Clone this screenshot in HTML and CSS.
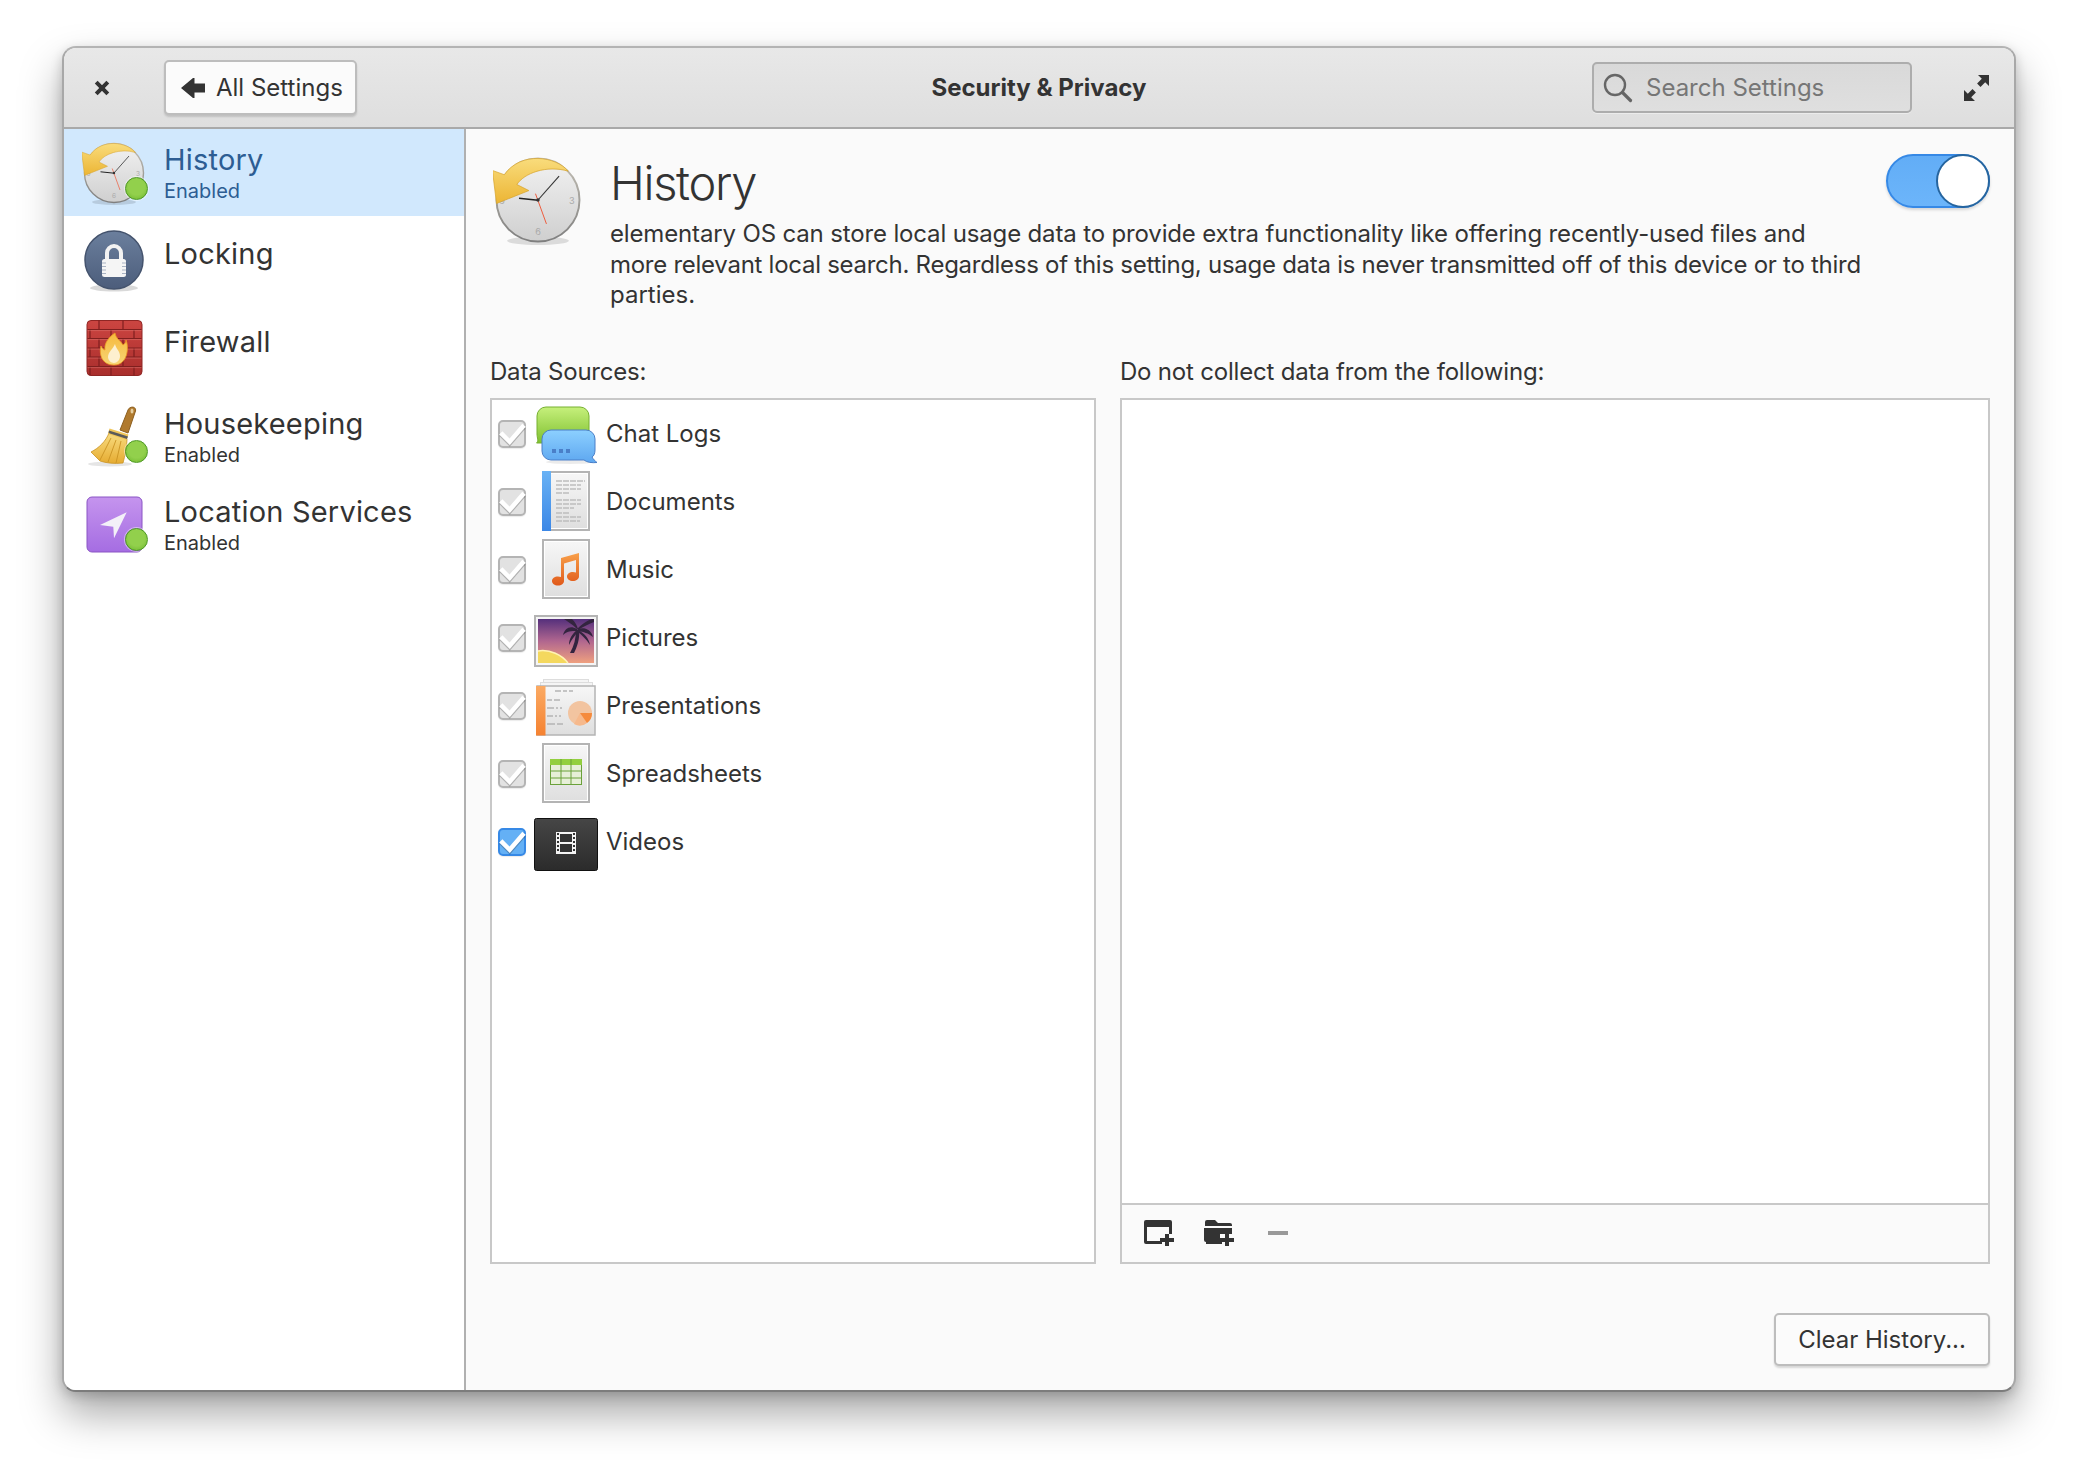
FILE: index.html
```html
<!DOCTYPE html>
<html lang="en">
<head>
<meta charset="utf-8">
<title>Security &amp; Privacy</title>
<link rel="stylesheet" href="styles.css">
</head>
<body>
<svg class="defs" width="0" height="0" aria-hidden="true">
  <defs>
    <linearGradient id="gFace" x1="0" y1="0" x2="0" y2="1"><stop offset="0" stop-color="#f2f2f2"/><stop offset="1" stop-color="#cfcfcf"/></linearGradient>
    <linearGradient id="gRing" x1="0" y1="0" x2="0" y2="1"><stop offset="0" stop-color="#c4c0b6"/><stop offset="1" stop-color="#7f7f7f"/></linearGradient>
    <linearGradient id="gArrow" x1="0" y1="0" x2="0" y2="1"><stop offset="0" stop-color="#f9dc7c"/><stop offset="1" stop-color="#ecb534"/></linearGradient>
    <linearGradient id="gLock" x1="0" y1="0" x2="0" y2="1"><stop offset="0" stop-color="#6b7f9d"/><stop offset="1" stop-color="#4c5d7b"/></linearGradient>
    <linearGradient id="gBrick" x1="0" y1="0" x2="0" y2="1"><stop offset="0" stop-color="#cc4541"/><stop offset="1" stop-color="#a92e2c"/></linearGradient>
    <linearGradient id="gFlame" x1="0" y1="0" x2="0" y2="1"><stop offset="0" stop-color="#f6b93c"/><stop offset="1" stop-color="#f7d575"/></linearGradient>
    <linearGradient id="gBristle" x1="0" y1="0" x2="0" y2="1"><stop offset="0" stop-color="#f8dc80"/><stop offset="1" stop-color="#e6ac32"/></linearGradient>
    <linearGradient id="gLoc" x1="0" y1="0" x2="0" y2="1"><stop offset="0" stop-color="#c594ee"/><stop offset="1" stop-color="#a56de2"/></linearGradient>
    <linearGradient id="gGreenB" x1="0" y1="0" x2="0" y2="1"><stop offset="0" stop-color="#c6f07c"/><stop offset="1" stop-color="#7fc02f"/></linearGradient>
    <linearGradient id="gBlueB" x1="0" y1="0" x2="0" y2="1"><stop offset="0" stop-color="#8cd0ff"/><stop offset="1" stop-color="#5ea7f0"/></linearGradient>
    <linearGradient id="gPaper" x1="0" y1="0" x2="0" y2="1"><stop offset="0" stop-color="#f7f7f7"/><stop offset="1" stop-color="#dedede"/></linearGradient>
    <linearGradient id="gStrip" x1="0" y1="0" x2="0" y2="1"><stop offset="0" stop-color="#69b2f5"/><stop offset="1" stop-color="#3b87e6"/></linearGradient>
    <linearGradient id="gNote" x1="0" y1="0" x2="0" y2="1"><stop offset="0" stop-color="#f8a04a"/><stop offset="1" stop-color="#e0591a"/></linearGradient>
    <linearGradient id="gSky" x1="0" y1="0" x2="0" y2="1"><stop offset="0" stop-color="#55307c"/><stop offset=".5" stop-color="#b0668f"/><stop offset="1" stop-color="#efa07f"/></linearGradient>
    <linearGradient id="gOrange" x1="0" y1="0" x2="0" y2="1"><stop offset="0" stop-color="#fbaa63"/><stop offset="1" stop-color="#f58231"/></linearGradient>
    <linearGradient id="gVideo" x1="0" y1="0" x2="0" y2="1"><stop offset="0" stop-color="#464646"/><stop offset="1" stop-color="#2b2b2b"/></linearGradient>
    <symbol id="clock" viewBox="0 0 64 64">
      <ellipse cx="32" cy="61" rx="22" ry="3" fill="#000" opacity=".12"/>
      <circle cx="32" cy="32" r="29.5" fill="url(#gFace)" stroke="url(#gRing)" stroke-width="1.4"/>
      <g font-family="Inter, sans-serif" font-size="6.5" fill="#aaa" text-anchor="middle">
        <text x="32" y="10">12</text><text x="56" y="34.500">3</text><text x="32" y="57">6</text><text x="6.500" y="34.500">9</text>
      </g>
      <path d="M-.4 11 2.500 34.500 25.500 25.300 17 21C22 13 38 7 53.500 11.500 45 1 20-3 8 14Z" fill="url(#gArrow)" stroke="#d6a32a" stroke-width=".5"/>
      <path d="M32 32 47 15" stroke="#333" stroke-width=".8" fill="none"/>
      <path d="M18.500 30.800 32 32.200" stroke="#222" stroke-width="1" fill="none"/>
      <path d="M30.200 27.500 38 49" stroke="#ee5a3c" stroke-width=".7" fill="none"/>
      <circle cx="32" cy="32" r="1.200" fill="#333"/>
    </symbol>
    <symbol id="tick" viewBox="0 0 28 28" overflow="visible">
      <path d="M2.800 14.500 11.700 23.500 26 7" fill="none" stroke="#000" stroke-opacity=".22" stroke-width="4.500"/>
      <path d="M2.800 12.800 11.700 21.800 26 5.300" fill="none" stroke="#fff" stroke-width="4.500"/>
    </symbol>
  </defs>
</svg>

<div class="window">
  <header class="header">
    <div class="header-left">
      <svg class="close-icon" width="16" height="16" viewBox="0 0 16 16"><path d="M2.200 2.200l11.600 11.600M13.800 2.200l-11.600 11.600" stroke="#333" stroke-width="4" fill="none"/></svg>
      <button class="btn back-btn">
        <svg width="24" height="20" viewBox="0 0 24 20"><path d="M0 10 12 0h1.500v5.500H24v9H13.500V20H12Z" fill="#333"/></svg>
        <span>All Settings</span>
      </button>
    </div>
    <div class="title">Security &amp; Privacy</div>
    <div class="header-right">
      <div class="search">
        <svg width="30" height="30" viewBox="0 0 30 30"><circle cx="12" cy="12" r="10" fill="none" stroke="#666" stroke-width="2.400"/><path d="M19.500 19.500l8 8" stroke="#666" stroke-width="3.200" stroke-linecap="round"/></svg>
        <span>Search Settings</span>
      </div>
      <svg class="expand-icon" width="25" height="26" viewBox="0 0 25 26"><path d="M14 0h11v11l-3.800-3.800-4.700 4.700-3.400-3.400 4.700-4.700Z M11 26H0V15l3.800 3.800 4.700-4.700 3.400 3.400-4.700 4.700Z" fill="#333"/></svg>
    </div>
  </header>

  <div class="body">
    <aside class="sidebar">
      <div class="side-row selected">
        <div class="side-icon"><svg width="64" height="64"><use href="#clock"/></svg><i class="badge"></i></div>
        <div class="side-text"><div class="side-title">History</div><div class="side-sub">Enabled</div></div>
      </div>
      <div class="side-row">
        <div class="side-icon">
          <svg width="64" height="64" viewBox="0 0 64 64">
            <ellipse cx="32" cy="60" rx="24" ry="3.500" fill="#000" opacity=".15"/>
            <circle cx="32" cy="32" r="29" fill="url(#gLock)" stroke="#44536d" stroke-width="1.500"/>
            <path d="M25 32v-7a7 7 0 0 1 14 0v7" fill="none" stroke="#f2f2f2" stroke-width="4"/>
            <rect x="20" y="31" width="24" height="18" rx="2.500" fill="#f5f5f5"/>
            <path d="M20 35h4M20 38.500h4M20 42h4M20 45.500h4M40 35h4M40 38.500h4M40 42h4M40 45.500h4" stroke="#a9b3c3" stroke-width="1.100"/>
          </svg>
        </div>
        <div class="side-text single"><div class="side-title">Locking</div></div>
      </div>
      <div class="side-row">
        <div class="side-icon">
          <svg width="64" height="64" viewBox="0 0 64 64">
            <rect x="5" y="4.500" width="55" height="55" rx="4" fill="url(#gBrick)" stroke="#8f2624" stroke-width="1"/>
            <path d="M5.500 13.500h54M5.500 22.500h54M5.500 32h54M5.500 41h54M5.500 50.500h54M17 4.500v9M41 4.500v9M8 13.500v9M29 13.500v9M52 13.500v9M17 22.500v9.500M41 22.500v9.500M8 32v9M29 32v9M52 32v9M17 41v9.500M41 41v9.500M8 50.500v9M29 50.500v9M52 50.500v9" stroke="#7f1f1e" stroke-width="1.200" fill="none"/>
            <path d="M5.500 14.600h54M5.500 23.600h54M5.500 33.100h54M5.500 42.100h54M5.500 51.600h54" stroke="#e07a74" stroke-width=".8" opacity=".6"/>
            <path d="M33 17c1 6 5 7 8 12 2-1 3-3 3-5 3 7 2 25-12 25-13 0-15-12-13-19 1 2 3 4 4 4-1-7 4-13 10-17Z" fill="url(#gFlame)" stroke="#ee9d22" stroke-width=".8"/>
            <path d="M33 28c1 5 5 7 5 12 0 4-3 7-6 7s-6-3-6-6c0-5 5-8 7-13Z" fill="#fdf0cf"/>
          </svg>
        </div>
        <div class="side-text single"><div class="side-title">Firewall</div></div>
      </div>
      <div class="side-row">
        <div class="side-icon">
          <svg width="64" height="64" viewBox="0 0 64 64">
            <ellipse cx="28" cy="60" rx="22" ry="2.500" fill="#000" opacity=".1"/>
            <path d="M38 26 46 6C47.500 2 54.500 2 53.500 7L46 29Z" fill="#b07a2e" stroke="#8d5f1f" stroke-width="1"/>
            <ellipse cx="50" cy="7" rx="1.500" ry="2.500" fill="#e6cfa0"/>
            <path d="M27 29 45 35C45 42 43 52 41 59 32 60 24 59 18 57L9 48C17 44 24 37 27 29Z" fill="url(#gBristle)" stroke="#c99324" stroke-width=".8"/>
            <path d="M29 34 18 56M34 36 26 58M39 37 34 59" stroke="#c99324" stroke-width=".9" fill="none"/>
            <path d="M27.500 24.500 46.500 30.500 44.500 36 26 30Z" fill="#f0c659"/>
            <path d="M27 26.500 46 32.500 45 35 26.500 29Z" fill="#5a5a5a"/>
          </svg>
          <i class="badge"></i>
        </div>
        <div class="side-text"><div class="side-title">Housekeeping</div><div class="side-sub">Enabled</div></div>
      </div>
      <div class="side-row">
        <div class="side-icon">
          <svg width="64" height="64" viewBox="0 0 64 64">
            <rect x="5" y="5" width="55" height="55" rx="5" fill="url(#gLoc)" stroke="#8a54c4" stroke-width="1"/>
            <path d="M18 33 44.700 20.300 32 46.300 31.300 34.700Z" fill="#f3f0f8"/>
          </svg>
          <i class="badge"></i>
        </div>
        <div class="side-text"><div class="side-title">Location Services</div><div class="side-sub">Enabled</div></div>
      </div>
    </aside>

    <main class="main">
      <section class="top">
        <svg class="top-icon" width="90" height="90"><use href="#clock"/></svg>
        <div class="top-text">
          <h1>History</h1>
          <p><span class="line-a">elementary OS can store local usage data to provide extra functionality like offering recently-used files and</span> <span class="line-b">more relevant local search. Regardless of this setting, usage data is never transmitted off of this device or to third</span> <span class="line-c">parties.</span></p>
        </div>
        <div class="switch"><i></i></div>
      </section>

      <section class="columns">
        <div class="col">
          <label class="col-label">Data Sources:</label>
          <div class="box list">
            <div class="row">
              <i class="check"><svg width="28" height="28"><use href="#tick"/></svg></i>
              <svg class="file-icon" width="64" height="64" viewBox="0 0 64 64">
                <path d="M12 5h34a9 9 0 0 1 9 9v18a9 9 0 0 1-9 9H12L2.500 41C5 39 3 36 3 32V14a9 9 0 0 1 9-9Z" fill="url(#gGreenB)" stroke="#76b030"/>
                <ellipse cx="36" cy="60" rx="24" ry="2" fill="#000" opacity=".08"/>
                <path d="M17 28h35a9 9 0 0 1 9 9v11c0 3-1 6-3 7 1 2 3 4 5 5.500-5 .5-10 0-13-2.500H17a9 9 0 0 1-9-9V37a9 9 0 0 1 9-9Z" fill="url(#gBlueB)" stroke="#4a7fc8" stroke-width="1"/>
                <path d="M18 47h4v4h-4ZM25 47h4v4h-4ZM32 47h4v4h-4Z" fill="#4a7fc8"/>
              </svg>
              <span>Chat Logs</span>
            </div>
            <div class="row">
              <i class="check"><svg width="28" height="28"><use href="#tick"/></svg></i>
              <svg class="file-icon" width="64" height="64" viewBox="0 0 64 64">
                <rect x="9" y="2" width="46" height="58" fill="url(#gPaper)" stroke="#b4b4b4" stroke-width="2"/>
                <rect x="10.500" y="3.500" width="43" height="55" fill="none" stroke="#fff"/>
                <rect x="8" y="1" width="9" height="60" fill="url(#gStrip)"/>
                <path d="M22 11h29M22 15h25M22 19h25M22 23h14M22 30h25M22 34h25M22 38h18M22 43h14M22 47h25M22 51h24" stroke="#bdbdbd" stroke-width="1.500" stroke-dasharray="6 1"/>
              </svg>
              <span>Documents</span>
            </div>
            <div class="row">
              <i class="check"><svg width="28" height="28"><use href="#tick"/></svg></i>
              <svg class="file-icon" width="64" height="64" viewBox="0 0 64 64">
                <rect x="9" y="2" width="46" height="58" fill="url(#gPaper)" stroke="#b4b4b4" stroke-width="2"/>
                <rect x="10.500" y="3.500" width="43" height="55" fill="none" stroke="#fff"/>
                <path d="M27 20 45 15V38.500C45 41 42 43 39 43 35.500 43 33 41 33 38.500S35.500 34 39 34C40 34 41 34.200 42 34.500V22L30 25.500V43C30 45.500 27.500 47.500 24 47.500S18 45.500 18 43 20.500 38.500 24 38.500C25 38.500 26 38.700 27 39Z" fill="url(#gNote)"/>
              </svg>
              <span>Music</span>
            </div>
            <div class="row">
              <i class="check"><svg width="28" height="28"><use href="#tick"/></svg></i>
              <svg class="file-icon" width="64" height="64" viewBox="0 0 64 64">
                <rect x="1" y="10" width="62" height="50" fill="#f5f5f5" stroke="#b4b4b4" stroke-width="2"/>
                <rect x="4" y="13" width="56" height="44" fill="url(#gSky)"/>
                <path d="M4 57V45C16 43 28 49 34 57Z" fill="#f4d85e"/>
                <path d="M4 45C16 43 28 49 34 57" fill="none" stroke="#fff3b4" stroke-width="1.500"/>
                <g fill="#33243f">
                  <path d="M36 47C40 40 42 32 42 24H45C46 33 43 41 40 47Z"/>
                  <path d="M43 23C36 19 31 22 29 29 33 25 37 25 43 25Z"/>
                  <path d="M43 23C38 18 33 15 30 13H38C41 16 43 19 44 23Z"/>
                  <path d="M43 23C47 19 52 15 58 13H60V16C54 18 49 21 44 24Z"/>
                  <path d="M44 23C50 21 57 23 59 31 54 27 50 26 44 25Z"/>
                  <path d="M44 24C50 27 55 32 56 39 52 33 48 29 44 26Z"/>
                  <path d="M43 24C38 28 35 33 35 39 38 33 41 29 44 26Z"/>
                </g>
              </svg>
              <span>Pictures</span>
            </div>
            <div class="row">
              <i class="check"><svg width="28" height="28"><use href="#tick"/></svg></i>
              <svg class="file-icon" width="64" height="64" viewBox="0 0 64 64">
                <rect x="9.500" y="5.500" width="45" height="10" fill="#f5f5f5" stroke="#ddd"/>
                <rect x="6.500" y="8.500" width="52" height="10" fill="#f5f5f5" stroke="#ddd"/>
                <rect x="3" y="12" width="58" height="49" fill="url(#gPaper)" stroke="#b4b4b4" stroke-width="1.500"/>
                <rect x="2" y="12" width="9.500" height="49.500" fill="url(#gOrange)"/>
                <path d="M21 17h6M29 17h4M35 17h4M13 26h5M20 26h6M13 34h7M22 34h2M26 34h2M13 42h6M21 42h2M25 42h2M13 50h8M23 50h6" stroke="#b4b4b4" stroke-width="1.500"/>
                <circle cx="46" cy="39" r="12" fill="#f2c4a0"/>
                <path d="M46 39 53 49a12 12 0 0 1-13 1Z" fill="#f6b98c"/>
                <path d="M46 39h12a12 12 0 0 1-5 10Z" fill="#f58a3c"/>
              </svg>
              <span>Presentations</span>
            </div>
            <div class="row">
              <i class="check"><svg width="28" height="28"><use href="#tick"/></svg></i>
              <svg class="file-icon" width="64" height="64" viewBox="0 0 64 64">
                <rect x="9" y="2" width="46" height="58" fill="url(#gPaper)" stroke="#b4b4b4" stroke-width="2"/>
                <rect x="10.500" y="3.500" width="43" height="55" fill="none" stroke="#fff"/>
                <rect x="16.500" y="17.500" width="31" height="25" fill="#e7efd8" stroke="#6aa13a"/>
                <rect x="16" y="17" width="32" height="6" fill="#93cf3f"/>
                <path d="M16 29h32M16 36h32M27 17v25M37 17v25" stroke="#6aa13a" stroke-width="1"/>
              </svg>
              <span>Spreadsheets</span>
            </div>
            <div class="row">
              <i class="check on"><svg width="28" height="28"><use href="#tick"/></svg></i>
              <svg class="file-icon" width="64" height="64" viewBox="0 0 64 64">
                <rect x=".5" y="8.500" width="63" height="52" rx="2" fill="url(#gVideo)" stroke="#111"/>
                <rect x="22" y="22" width="20" height="22" fill="#f4f4f4"/>
                <rect x="26" y="24" width="12" height="8" fill="#333"/><rect x="26" y="34" width="12" height="8" fill="#333"/>
                <path d="M23 24h2M23 28h2M23 32h2M23 36h2M23 40h2M39 24h2M39 28h2M39 32h2M39 36h2M39 40h2" stroke="#333" stroke-width="2"/>
              </svg>
              <span>Videos</span>
            </div>
          </div>
        </div>
        <div class="col">
          <label class="col-label">Do not collect data from the following:</label>
          <div class="box exclude">
            <div class="exclude-list"></div>
            <div class="toolbar">
              <svg width="30" height="26" viewBox="0 0 30 26"><path d="M2 0h24a2 2 0 0 1 2 2v12h-3V7H3v14h15v3H2a2 2 0 0 1-2-2V2a2 2 0 0 1 2-2Z" fill="#333"/><path d="M21 14h4v4h5v4h-5v4h-4v-4h-5v-4h5Z" fill="#333"/></svg>
              <svg width="30" height="26" viewBox="0 0 30 26"><path d="M3 0h8l3 3h12a2 2 0 0 1 2 2v1H1V2a2 2 0 0 1 2-2Z M0 8h28v6H16v8H2a2 2 0 0 1-2-2Z M18 22v2H2v-2Z" fill="#333"/><path d="M21 14h4v4h5v4h-5v4h-4v-4h-5v-4h5Z" fill="#333"/></svg>
              <i class="minus"></i>
            </div>
          </div>
        </div>
      </section>

      <footer class="footer"><button class="btn clear-btn">Clear History...</button></footer>
    </main>
  </div>
</div>
</body>
</html>
```
FILE: styles.css
```css
* { box-sizing: border-box; }
html, body { margin: 0; padding: 0; }
body {
  width: 2078px;
  height: 1470px;
  background: #fff;
  font-family: Inter, "Noto Sans", sans-serif;
  color: #333;
  overflow: hidden;
  padding: 46px 0 0 62px;
}
.defs { position: absolute; }
.window {
  width: 1954px;
  height: 1346px;
  border: 2px solid #a8a8a8;
  border-top-color: #b4b4b4;
  border-bottom-color: #7c7c7c;
  border-radius: 14px;
  background: #fafafa;
  box-shadow: 0 22px 42px rgba(0,0,0,.34), 0 4px 12px rgba(0,0,0,.18);
  display: flex;
  flex-direction: column;
  overflow: hidden;
}
.header {
  height: 81px;
  flex: none;
  display: grid;
  grid-template-columns: 1fr auto 1fr;
  align-items: center;
  background: linear-gradient(#e8e8e8, #dedede);
  border-bottom: 2px solid #a9a9a9;
}
.header-left { display: flex; align-items: center; padding-left: 30px; gap: 54px; }
.header-right { display: flex; align-items: center; justify-content: flex-end; padding-right: 25px; gap: 52px; }
.title { font-size: 24px; font-weight: 700; color: #333; }
.btn {
  font-family: inherit;
  color: #333;
  background: #fbfbfb;
  border: 2px solid #bdbdbd;
  border-radius: 5px;
  box-shadow: 0 2px 2px rgba(0,0,0,.14);
  display: flex;
  align-items: center;
  margin: 0;
  padding: 0;
}
.back-btn { width: 193px; height: 55px; font-size: 24px; padding-left: 15px; gap: 11px; flex: none; }
.search {
  width: 320px;
  height: 51px;
  border: 2px solid #adadad;
  border-radius: 5px;
  background: linear-gradient(#d9d9d9, #dfdfdf);
  box-shadow: 0 1px 0 rgba(255,255,255,.4);
  display: flex;
  align-items: center;
  padding-left: 9px;
  gap: 13px;
  font-size: 24px;
  color: #767676;
}
.body { flex: 1; display: flex; min-height: 0; }
.sidebar {
  width: 402px;
  flex: none;
  background: #fff;
  border-right: 2px solid #b0b0b0;
}
.side-row { height: 88px; display: flex; align-items: center; padding-left: 18px; }
.side-row.selected { height: 87px; background: #d1e8fd; color: #2d5d93; }
.side-row.selected .side-text { padding-top: 13px; }
.side-icon { position: relative; width: 64px; height: 64px; flex: none; }
.side-icon svg { display: block; }
.badge {
  position: absolute;
  left: 42.500px;
  top: 36px;
  width: 23px;
  height: 23px;
  border-radius: 50%;
  background: radial-gradient(circle at 50% 42%, #92d04c 0 50%, #6ab52a 100%);
  border: 1.500px solid #4f9a25;
  box-shadow: 0 0 0 1px rgba(255,255,255,.45);
}
.side-text { margin-left: 18px; align-self: flex-start; padding-top: 14px; }
.side-text.single { padding-top: 20px; }
.side-title { font-size: 29px; line-height: 36px; letter-spacing: .2px; }
.side-sub { font-size: 20px; line-height: 25px; margin-top: 1px; }
.main { flex: 1; display: flex; flex-direction: column; padding: 0 24px 24px 24px; min-width: 0; }
.top { height: 228px; flex: none; display: flex; align-items: flex-start; position: relative; }
.top-icon { flex: none; margin: 26px 27px 0 3px; display: block; }
.top-text { width: 1270px; padding-top: 24px; }
h1 { margin: 0 0 6px; font-size: 47px; line-height: 60px; font-weight: 300; letter-spacing: -1.300px; color: #333; }
.top-text p { margin: 0; font-size: 24px; line-height: 30.500px; }
.line-a, .line-b, .line-c { display: block; white-space: nowrap; }
.line-a { letter-spacing: -.15px; }
.line-b { letter-spacing: -.27px; }
.switch {
  position: absolute;
  right: 0;
  top: 25px;
  width: 104px;
  height: 54px;
  border-radius: 27px;
  background: linear-gradient(#62adf6, #6cb5fa);
  border: 2px solid #3689e6;
  box-shadow: 0 2px 3px rgba(0,0,0,.15);
}
.switch i {
  position: absolute;
  right: -2px;
  top: -2px;
  width: 54px;
  height: 54px;
  border-radius: 50%;
  background: #fff;
  border: 2px solid #26659f;
}
.columns { flex: 1; display: grid; grid-template-columns: 606px 870px; gap: 24px; min-height: 0; }
.col { display: flex; flex-direction: column; min-height: 0; }
.col-label { height: 41px; font-size: 24px; line-height: 30px; letter-spacing: -.2px; flex: none; }
.box { flex: 1; border: 2px solid #c8c8c8; background: #fff; min-height: 0; }
.row { height: 68px; display: flex; align-items: center; padding-left: 6px; font-size: 24px; }
.file-icon { flex: none; margin-left: 8px; display: block; }
.row span { margin-left: 8px; padding-bottom: 2px; }
.check {
  display: block;
  flex: none;
  width: 28px;
  height: 28px;
  border: 2px solid #b4b4b4;
  border-radius: 5px;
  background: #e2e2e2;
  position: relative;
  box-shadow: 0 1px 1px rgba(0,0,0,.08);
}
.check svg { position: absolute; left: -2px; top: -2px; overflow: visible; display: block; }
.check.on { background: #64b0f5; border-color: #3689e6; }
.exclude { display: flex; flex-direction: column; }
.exclude-list { flex: 1; }
.toolbar {
  height: 59px;
  flex: none;
  border-top: 2px solid #c8c8c8;
  background: #fafafa;
  display: flex;
  align-items: center;
  padding: 0 0 2px 22px;
  gap: 30px;
}
.minus { display: block; width: 20px; height: 4px; background: #999; margin-left: 4px; }
.footer { flex: none; display: flex; justify-content: flex-end; padding-top: 49px; }
.clear-btn { width: 216px; height: 53px; font-size: 24px; justify-content: center; }
```
